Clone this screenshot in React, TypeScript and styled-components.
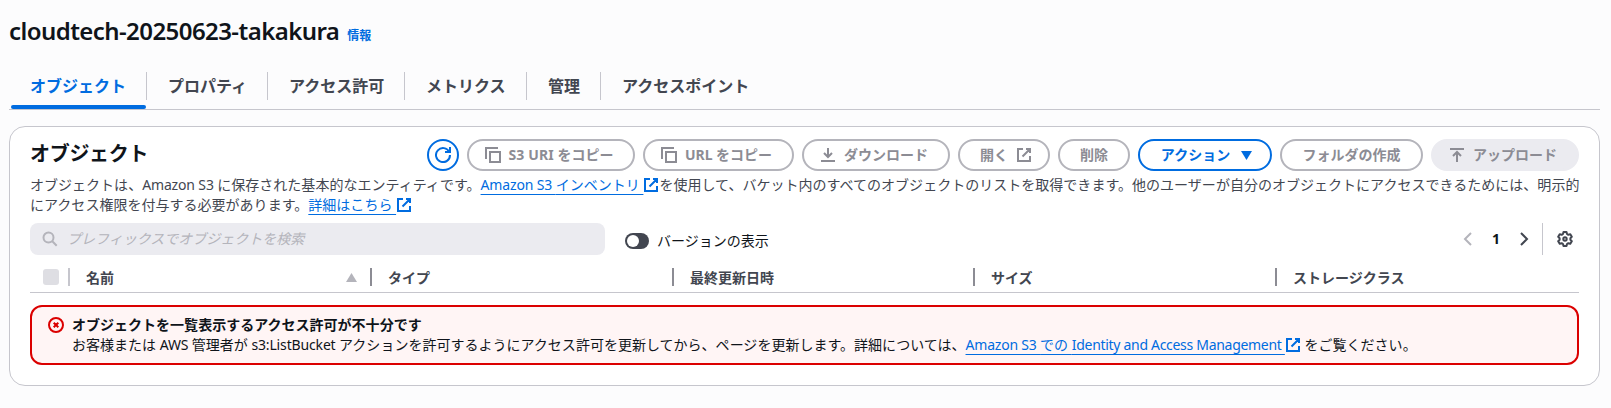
import React from "react";
import styled, { createGlobalStyle } from "styled-components";

const color = {
  text: "#0f141a",
  body: "#424650",
  blue: "#006ce0",
  muted: "#8c8c94",
  line: "#c6c6cd",
  disabledBorder: "#b4b4bb",
  disabledBg: "#ebebf0",
  error: "#db0000",
};

const GlobalStyle = createGlobalStyle`
  *, *::before, *::after { box-sizing: border-box; }
  body {
    margin: 0;
    background: #fcfcfd;
    color: ${color.text};
    font: 400 14px/20px "Noto Sans", "Noto Sans CJK JP", sans-serif;
    overflow: hidden;
  }
`;

const Page = styled.main`
  height: 408px;
  padding: 15px 11px 0 9px;
  white-space: nowrap;
`;

const Latin = styled.span<{ $ls: number }>`
  letter-spacing: ${(p) => p.$ls}px;
`;

const TitleRow = styled.header`
  display: flex;
  align-items: baseline;
  height: 33px;
  gap: 8px;
`;

const Title = styled.h1`
  margin: 0;
  font-size: 24px;
  line-height: 31px;
  font-weight: 600;
`;

const Info = styled.a`
  color: ${color.blue};
  font-size: 12px;
  font-weight: 700;
`;

const Tabs = styled.nav`
  display: flex;
  height: 62px;
  padding-top: 13px;
  border-bottom: 1px solid ${color.line};
`;

const Tab = styled.a<{ $width: number; $active?: boolean }>`
  position: relative;
  width: ${(p) => p.$width}px;
  height: 48px;
  padding: 14px 0 0 21px;
  font-size: 16px;
  line-height: 22px;
  font-weight: 700;
  color: ${(p) => (p.$active ? color.blue : color.body)};

  &:not(:last-child)::after {
    content: "";
    position: absolute;
    right: 0;
    top: 11px;
    height: 28px;
    width: 1px;
    background: ${color.line};
  }
  &::before {
    content: "";
    display: ${(p) => (p.$active ? "block" : "none")};
    position: absolute;
    left: 2px;
    right: 1px;
    bottom: 0;
    height: 4px;
    border-radius: 2px;
    background: ${color.blue};
  }
`;

const Panel = styled.section`
  height: 260px;
  margin-top: 16px;
  padding: 12px 20px 0;
  background: #fff;
  border: 1px solid ${color.line};
  border-radius: 16px;
`;

const PanelHeader = styled.div`
  display: flex;
  justify-content: space-between;
  align-items: center;
  height: 32px;
`;

const PanelTitle = styled.h2`
  margin: -3px 0 0;
  font-size: 20px;
  line-height: 24px;
  font-weight: 700;
  letter-spacing: -0.3px;
`;

const Actions = styled.div`
  display: flex;
  gap: 8px;
`;

type Kind = "disabled" | "normal" | "filled";

const Button = styled.button<{ $width: number; $kind: Kind; $icon?: "left" | "right" }>`
  display: flex;
  align-items: center;
  justify-content: center;
  gap: 8px;
  width: ${(p) => p.$width}px;
  height: 32px;
  padding: 0 ${(p) => (p.$icon === "left" ? 4 : 0)}px 0 ${(p) => (p.$icon === "right" ? 4 : 0)}px;
  font: inherit;
  font-weight: 700;
  border-radius: 20px;
  border: 2px solid
    ${(p) => (p.$kind === "normal" ? color.blue : p.$kind === "filled" ? color.disabledBg : color.disabledBorder)};
  background: ${(p) => (p.$kind === "filled" ? color.disabledBg : "#fff")};
  color: ${(p) => (p.$kind === "normal" ? color.blue : color.muted)};
`;

const Description = styled.p`
  margin: 4px 0 0;
  color: ${color.body};
  letter-spacing: 0.02px;
`;

const Link = styled.a`
  color: ${color.blue};
  text-decoration: underline;
  text-decoration-thickness: 1px;
  text-underline-offset: 4px;
`;

const Svg = styled.svg`
  display: block;
  flex: none;
  fill: none;
  stroke: currentColor;
  stroke-width: 2;
`;

const LinkIcon = styled(Svg)`
  display: inline-block;
  vertical-align: -3px;
  color: ${color.blue};
`;

const Filters = styled.div`
  display: flex;
  align-items: center;
  height: 32px;
  margin-top: 8px;
`;

const Search = styled.div`
  display: flex;
  align-items: center;
  gap: 9px;
  width: 575px;
  height: 32px;
  padding-left: 12px;
  border-radius: 8px;
  background: ${color.disabledBg};
  color: ${color.disabledBorder};
  font-style: italic;
`;

const Toggle = styled.span`
  width: 24px;
  height: 16px;
  margin: 4px 8px 0 20px;
  padding: 2px;
  border-radius: 8px;
  background: ${color.body};

  &::after {
    content: "";
    display: block;
    width: 12px;
    height: 12px;
    border-radius: 50%;
    background: #fff;
  }
`;

const ToggleLabel = styled.span`
  padding-top: 3px;
`;

const Pager = styled.div`
  display: flex;
  align-items: center;
  margin-left: auto;
  padding-right: 6px;
  height: 32px;
  color: ${color.body};
`;

const Previous = styled(Svg)`
  color: ${color.disabledBorder};
`;

const PageNumber = styled.b`
  width: 40px;
  text-align: center;
  color: ${color.text};
`;

const PagerRule = styled.span`
  width: 1px;
  height: 32px;
  margin: 0 14px 0 10px;
  background: ${color.line};
`;

const Columns = styled.div`
  display: grid;
  grid-template-columns: 38px 302px 302px 301px 302px 1fr;
  align-items: center;
  height: 38px;
  border-bottom: 1px solid ${color.line};
`;

const Column = styled.div<{ $light?: boolean }>`
  display: flex;
  align-items: center;
  justify-content: space-between;
  height: 18px;
  margin-top: 7px;
  padding: 1px 13px 0 16px;
  border-left: 2px solid ${(p) => (p.$light ? color.line : color.muted)};
  color: ${color.body};
  font-weight: 700;
`;

const Checkbox = styled.span`
  width: 16px;
  height: 16px;
  margin: 6px 0 0 13px;
  border-radius: 3px;
  background: #dedee3;
`;

const Alert = styled.div`
  display: flex;
  gap: 8px;
  height: 60px;
  margin-top: 12px;
  padding: 8px 16px;
  border: 2px solid ${color.error};
  border-radius: 12px;
  background: #fff5f5;
  letter-spacing: 0.015px;
`;

const AlertIcon = styled(Svg)`
  margin-top: 2px;
  color: ${color.error};
`;

const AlertTitle = styled.div`
  font-weight: 700;
`;

const Caret = styled.svg<{ $menu?: boolean }>`
  flex: none;
  margin: 0 ${(p) => (p.$menu ? -3 : 0)}px 0 ${(p) => (p.$menu ? 3 : 0)}px;
`;

const paths = {
  refresh: "M10 5h5V0M15 8a7 7 0 1 1-.7-3",
  copy: "M15 5H5v10h10V5ZM13 1H1v11",
  external: "M10 2h4v4M6.5 9.5 14 2M14 9v5H2V2h5",
  download: "m4 6 4 4 4-4M8 10V1M1 14h14",
  upload: "m4 9 4-4 4 4M8 5v10M1 2h14",
  search: "M11.5 6.5a5 5 0 1 1-10 0 5 5 0 0 1 10 0ZM10.3 10.3l4.4 4.4",
  previous: "m11 2-6 6 6 6",
  next: "m5 2 6 6-6 6",
  error: "M15 8A7 7 0 1 1 1 8a7 7 0 0 1 14 0ZM5.7 5.7l4.6 4.6M10.3 5.7l-4.6 4.6",
};

const Icon = ({ name }: { name: keyof typeof paths }) => (
  <Svg width="16" height="16" viewBox="0 0 16 16">
    <path d={paths[name]} />
  </Svg>
);

const External = () => (
  <LinkIcon width="16" height="16" viewBox="0 0 16 16">
    <path d={paths.external} />
  </LinkIcon>
);

const Gear = () => (
  <Svg width="16" height="16" viewBox="0 0 16 16">
    <path
      strokeLinejoin="round"
      d="M6.5 1h3L10 3l1.3.8 2-.6 1.5 2.6-1.4 1.4v1.6l1.4 1.4-1.5 2.6-2-.6-1.3.8-.5 2h-3L6 13l-1.3-.8-2 .6-1.5-2.6 1.4-1.4V7.2L1.2 5.8l1.5-2.6 2 .6L6 3Z"
    />
    <circle cx="8" cy="8" r="1.7" />
  </Svg>
);

const Triangle = ({ up }: { up?: boolean }) => (
  <Caret $menu={!up} width="11" height="9" viewBox="0 0 11 9">
    <path d={up ? "M5.5 0 11 9H0Z" : "M0 0h11L5.5 9Z"} fill={up ? color.disabledBorder : color.blue} />
  </Caret>
);

export default function App() {
  return (
    <Page lang="ja">
      <GlobalStyle />
      <TitleRow>
        <Title>
          <Latin $ls={-0.57}>cloudtech-20250623-takakura</Latin>
        </Title>
        <Info>情報</Info>
      </TitleRow>
      <Tabs>
        <Tab $width={138} $active>オブジェクト</Tab>
        <Tab $width={121}>プロパティ</Tab>
        <Tab $width={137}>アクセス許可</Tab>
        <Tab $width={122}>メトリクス</Tab>
        <Tab $width={74}>管理</Tab>
        <Tab $width={170}>アクセスポイント</Tab>
      </Tabs>
      <Panel>
        <PanelHeader>
          <PanelTitle>オブジェクト</PanelTitle>
          <Actions>
            <Button $width={32} $kind="normal" aria-label="refresh"><Icon name="refresh" /></Button>
            <Button $width={168} $kind="disabled" $icon="left">
              <Icon name="copy" />
              <span><Latin $ls={0.1}>S3 URI </Latin>をコピー</span>
            </Button>
            <Button $width={151} $kind="disabled" $icon="left">
              <Icon name="copy" />
              <span><Latin $ls={0}>URL </Latin>をコピー</span>
            </Button>
            <Button $width={148} $kind="disabled" $icon="left"><Icon name="download" />ダウンロード</Button>
            <Button $width={92} $kind="disabled" $icon="right">開く<Icon name="external" /></Button>
            <Button $width={72} $kind="disabled">削除</Button>
            <Button $width={134} $kind="normal">アクション<Triangle /></Button>
            <Button $width={143} $kind="disabled">フォルダの作成</Button>
            <Button $width={148} $kind="filled" $icon="left"><Icon name="upload" />アップロード</Button>
          </Actions>
        </PanelHeader>
        <Description>
          オブジェクトは、<Latin $ls={-0.15}>Amazon S3 </Latin>に保存された基本的なエンティティです。
          <Link><Latin $ls={-0.15}>Amazon S3 </Latin>インベントリ&nbsp;</Link><External />
          を使用して、バケット内のすべてのオブジェクトのリストを取得できます。他のユーザーが自分のオブジェクトにアクセスできるためには、明示的
          <br />
          にアクセス権限を付与する必要があります。<Link>詳細はこちら&nbsp;</Link><External />
        </Description>
        <Filters>
          <Search><Icon name="search" />プレフィックスでオブジェクトを検索</Search>
          <Toggle />
          <ToggleLabel>バージョンの表示</ToggleLabel>
          <Pager>
            <Previous width="16" height="16" viewBox="0 0 16 16">
              <path d={paths.previous} />
            </Previous>
            <PageNumber>1</PageNumber>
            <Icon name="next" />
            <PagerRule />
            <Gear />
          </Pager>
        </Filters>
        <Columns>
          <Checkbox />
          <Column $light>名前<Triangle up /></Column>
          <Column>タイプ</Column>
          <Column>最終更新日時</Column>
          <Column>サイズ</Column>
          <Column>ストレージクラス</Column>
        </Columns>
        <Alert>
          <AlertIcon width="16" height="16" viewBox="0 0 16 16"><path d={paths.error} /></AlertIcon>
          <div>
            <AlertTitle>オブジェクトを一覧表示するアクセス許可が不十分です</AlertTitle>
            <div>
              お客様または <Latin $ls={-0.2}>AWS </Latin>管理者が <Latin $ls={-0.15}>s3:ListBucket </Latin>
              アクションを許可するようにアクセス許可を更新してから、ページを更新します。詳細については、
              <Link><Latin $ls={-0.2}>Amazon S3 </Latin>での <Latin $ls={-0.3}>Identity and Access Management&nbsp;</Latin></Link>
              <External /> をご覧ください。
            </div>
          </div>
        </Alert>
      </Panel>
    </Page>
  );
}
